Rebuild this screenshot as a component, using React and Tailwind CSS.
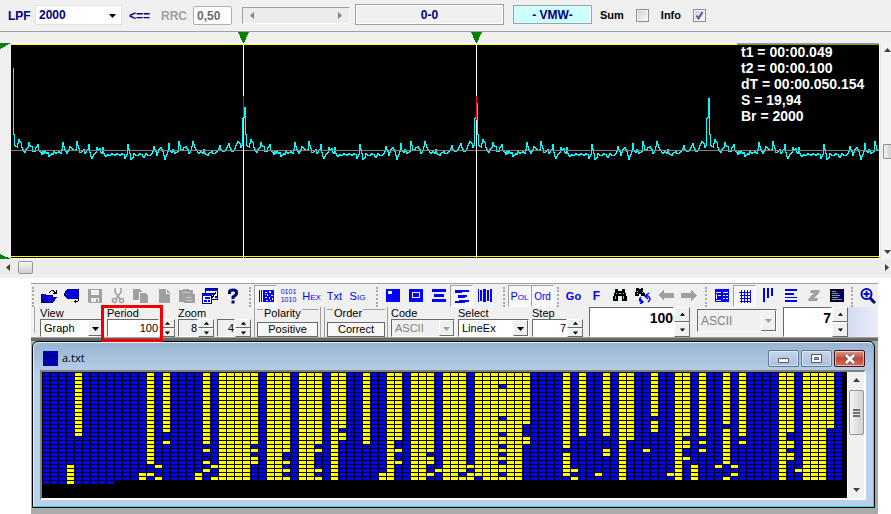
import { useState } from 'react';

// One period of the correlation trace, [dx, y] counted from the peak
const PERIOD = [
    [1, 117], [1, 134], [2, 140], [2, 145], [4, 146], [5, 147], [5, 143], [6, 139], [8, 142], [9, 147], [10, 149], [11, 151], [12, 152], [13, 149],
    [15, 147], [16, 142], [17, 145], [19, 146], [20, 151], [22, 151], [23, 147], [24, 146], [25, 144], [26, 150], [28, 152], [29, 154], [30, 151],
    [31, 153], [32, 151], [34, 153], [35, 152], [36, 156], [38, 154], [39, 153], [40, 154], [41, 151], [43, 153], [44, 152], [46, 151], [48, 153],
    [49, 149], [50, 142], [52, 149], [54, 153], [55, 151], [57, 146], [59, 148], [61, 150], [63, 149], [64, 141], [66, 148], [67, 152], [69, 151],
    [71, 149], [72, 153], [75, 149], [76, 144], [77, 152], [78, 156], [79, 158], [81, 154], [83, 152], [84, 147], [85, 150], [87, 148], [88, 152],
    [89, 153], [90, 147], [91, 153], [93, 156], [95, 154], [97, 155], [99, 153], [101, 154], [102, 155], [104, 153], [107, 155], [109, 153],
    [111, 154], [112, 158], [114, 154], [115, 144], [117, 153], [118, 159], [120, 157], [121, 153], [123, 155], [125, 155], [127, 153], [129, 154],
    [131, 157], [133, 153], [135, 155], [137, 155], [139, 153], [140, 151], [141, 146], [143, 151], [144, 155], [146, 149], [148, 147], [150, 151],
    [152, 159], [153, 156], [155, 151], [156, 143], [157, 150], [159, 152], [160, 149], [162, 153], [165, 151], [166, 141], [168, 149], [169, 150],
    [171, 147], [173, 146], [175, 149], [176, 153], [178, 150], [180, 141], [182, 147], [184, 150], [186, 153], [188, 151], [190, 153], [191, 149],
    [192, 153], [195, 155], [196, 153], [199, 151], [200, 153], [202, 153], [205, 150], [207, 145], [208, 149], [210, 151], [212, 150], [214, 147],
    [216, 143], [217, 147], [219, 151], [221, 150], [223, 145], [225, 141], [227, 143], [228, 147], [229, 145], [230, 141], [230, 118], [231, 117],
];

const PEAKS = [
    [12, 68],
    [244, 107],
    [476, 103],
    [708, 98],
];

// Stepped trace: one horizontal and one vertical move per pixel column
function tracePath() {
    const points = PEAKS.flatMap(([x, top]) => [[x, top], ...PERIOD.map(([dx, y]) => [x + dx, y])]).filter(([x]) => x < 879);
    let d = `M${points[0][0] + 0.5} ${points[0][1] + 0.5}`;
    for (let i = 1; i < points.length; i++) {
        const [x0, y0] = points[i - 1];
        const [x1, y1] = points[i];
        if (x1 === x0) d += `V${y1 + 0.5}`;
        for (let x = x0 + 1; x <= x1; x++) {
            const y = Math.round(y0 + ((y1 - y0) * (x - x0)) / (x1 - x0));
            d += `H${x + 0.5}V${y + 0.5}`;
        }
    }
    return d;
}

const COLUMNS = 100;
const ALL = [[0, 26]];

// Column -> ranges of rows holding a "1"
const BITS = {
    3: [[23, 27]], 4: [[0, 15]], 12: [[25, 26]], 13: [[0, 22], [25, 25]], 14: [[23, 23], [26, 26]], 15: [[0, 14], [17, 17]],
    19: [[25, 26]], 20: [[0, 17], [19, 19], [22, 22], [24, 24]], 21: [[23, 23], [26, 26]],
    22: ALL, 23: ALL, 24: ALL, 25: ALL, 26: [[0, 17], [19, 19], [21, 22]],
    28: ALL, 29: ALL, 30: [[0, 19], [22, 22], [24, 24], [26, 26]], 32: ALL, 33: ALL, 34: [[0, 17], [19, 19], [24, 24], [26, 26]],
    36: ALL, 37: [[0, 13], [15, 16]], 40: [[0, 17]], 42: [[25, 26]], 43: ALL, 44: [[0, 16], [19, 19], [22, 22]],
    46: ALL, 47: ALL, 48: [[0, 19], [21, 22], [25, 25]], 49: [[24, 24]], 50: ALL, 51: ALL, 52: [[0, 24], [26, 26]],
    53: [[23, 23], [25, 26]], 54: [[0, 25]], 55: ALL, 56: ALL,
    57: [[0, 2], [4, 10], [12, 14], [16, 17], [19, 19], [21, 21], [23, 24], [26, 26]],
    58: ALL, 59: ALL, 60: [[0, 12], [16, 17]], 65: [[0, 18], [20, 25]], 66: [[24, 24], [26, 26]], 67: [[0, 15]], 69: [[25, 25]],
    70: [[0, 15], [19, 20]], 72: ALL, 73: [[0, 16]], 75: [[19, 19]], 76: [[0, 10], [12, 14]], 78: [[25, 25]], 79: ALL,
    80: [[0, 15], [17, 18], [21, 21]], 81: [[23, 26]], 82: [[0, 15], [17, 17], [19, 19]], 84: [[23, 23]],
    85: [[0, 12], [14, 22], [26, 26]], 86: [[23, 23], [25, 25]], 87: [[0, 15], [17, 17]],
    92: ALL, 93: [[0, 14], [17, 18], [20, 21]], 94: [[24, 24]], 95: ALL, 96: ALL, 97: ALL, 98: [[0, 13]],
};

function bitmapPath(wanted) {
    let d = '';
    for (let col = 0; col < COLUMNS; col++) {
        const rows = col < 9 ? 28 : 27;
        for (let row = 0; row < rows; row++) {
            const on = (BITS[col] || []).some(([a, b]) => row >= a && row <= b);
            if (on === wanted) d += `M${1 + col * 8} ${1 + row * 4}h7v3h-7z`;
        }
    }
    return d;
}

function Arrow({ dir = 'down', className = 'text-black' }) {
    const shapes = {
        down: 'M0 2h7L3.5 6z',
        up: 'M0 5h7L3.5 1z',
        left: 'M5 0v7L1 3.5z',
        right: 'M2 0v7l4-3.5z',
    };
    return (
        <svg viewBox="0 0 7 7" className={`w-[7px] h-[7px] ${className}`} fill="currentColor">
            <path d={shapes[dir]} />
        </svg>
    );
}

function Check({ id, label, defaultChecked }) {
    return (
        <div className="flex items-center gap-3">
            <label htmlFor={id} className="text-[11px] font-bold text-black">{label}</label>
            <span className="relative flex">
                <input
                    id={id}
                    type="checkbox"
                    defaultChecked={defaultChecked}
                    className="peer appearance-none size-[13px] border border-[#8e8f8f] bg-linear-to-br from-[#c8ccd2] to-white shadow-[inset_0_0_0_1px_#f4f4f4]"
                />
                <svg viewBox="0 0 13 13" className="absolute inset-0 hidden peer-checked:block pointer-events-none" fill="none" stroke="#4a5f97" strokeWidth="2">
                    <path d="M3.5 6.5L5.5 9.5L9.5 3" />
                </svg>
            </span>
        </div>
    );
}

function TopBar() {
    return (
        <div className="flex items-center h-8 bg-[#f0f0f0] border-b border-[#a0a0a0] font-bold text-xs text-[#000080]">
            <label htmlFor="lpf" className="w-[35px] pl-2">LPF</label>
            <div className="relative w-[87px] h-5 -mt-0.5">
                <select id="lpf" className="appearance-none w-full h-full pl-[3px] bg-white border border-[#e2e3ea] font-bold">
                    <option>2000</option>
                </select>
                <span className="absolute right-1.5 top-[7px] pointer-events-none"><Arrow /></span>
            </div>
            <span className="w-[39px] pl-[7px]">&lt;==</span>
            <label htmlFor="rrc" className="w-8 text-[#a0a0a0]">RRC</label>
            <input id="rrc" defaultValue="0,50" className="w-[39px] h-[19px] pl-[3px] bg-white border border-[#b0b0b0] rounded-xs text-[#6d6d6d] font-bold" />
            <div className="flex items-center justify-between w-[108px] h-[17px] ml-2.5 px-1.5 bg-[#ececec] border border-[#a0a0a0] border-b-white border-r-white">
                <button aria-label="Scroll left"><Arrow dir="left" className="text-[#838383]" /></button>
                <button aria-label="Scroll right"><Arrow dir="right" className="text-[#838383]" /></button>
            </div>
            <button className="w-[149px] h-[21px] ml-[5px] -mt-0.5 border border-[#a0a0a0] shadow-[inset_1px_1px_0_#fff,inset_-1px_-1px_0_#fff] font-bold">0-0</button>
            <button className="w-[79px] h-[19px] ml-[9px] -mt-0.5 border border-[#a0a0a0] bg-[#ccffff] shadow-[inset_-1px_0_0_#fff] font-bold">- VMW-</button>
            <div className="flex gap-3 ml-2">
                <Check id="sum" label="Sum" />
                <Check id="info" label="Info" defaultChecked />
            </div>
        </div>
    );
}

function Plot() {
    return (
        <div className="flex bg-[#f0f0f0]">
            <div className="relative flex-1">
                <svg viewBox="0 32 880 227" preserveAspectRatio="none" className="block w-full h-[227px]" shapeRendering="crispEdges">
                    <path d="M11 43h869v216h-869z" fill="#fff" />
                    <path d="M11 44h868v214h-868z" fill="#000" />
                    <path d="M11 44h868v1h-868zM11 256h868v1h-868z" fill="#ff0" />
                    <path d={tracePath()} fill="none" stroke="#00ffff" />
                    <path d="M11 150h868v1h-868z" fill="#808080" />
                    <path d="M243 43h1v215h-1zM476 43h1v215h-1z" fill="#fff" />
                    <path d="M243 96h1v21h-1zM476 96h1v24h-1z" fill="#f00" />
                    <g fill="#008000">
                        <path d="M238 32h11l-5 11h-1zM471 32h11l-5 11h-1z" />
                        <path d="M0 43h11L0 49zM0 254l11 5H0z" />
                    </g>
                </svg>
                <div className="absolute right-px top-[11px] w-[142px] h-[84px] pt-px pl-1 bg-black/40 text-white text-sm leading-4 font-bold whitespace-nowrap">
                    <p>t1 = 00:00.049</p>
                    <p>t2 = 00:00.100</p>
                    <p>dT = 00:00.050.154</p>
                    <p>S = 19,94</p>
                    <p>Br = 2000</p>
                </div>
            </div>
            <div className="flex flex-col items-center w-[11px] mt-[11px] pt-1 pb-1 pl-0.5 bg-[#f3f3f3] border-l border-[#e3e3e3]">
                <button aria-label="Scroll up" className="flex"><Arrow dir="up" className="text-[#404040]" /></button>
                <div className="w-full h-[15px] mt-[90px] border border-r-0 border-[#8e8e8e] rounded-l-xs bg-linear-to-r from-[#f5f5f5] to-[#cfcfcf]" />
                <button aria-label="Scroll down" className="flex mt-auto"><Arrow dir="down" className="text-[#404040]" /></button>
            </div>
        </div>
    );
}

function HScroll() {
    return (
        <div className="flex items-start h-[19px] bg-[#f0f0f0]">
            <div className="flex items-center w-full h-[14px] mt-px pl-[5px] pr-px bg-[#ececec]">
                <button aria-label="Scroll left"><Arrow dir="left" className="text-[#404040]" /></button>
                <div className="w-[15px] h-[13px] ml-1.5 border border-[#979797] rounded-xs bg-linear-to-b from-[#f5f5f5] to-[#cfcfcf]" />
                <button aria-label="Scroll right" className="ml-auto"><Arrow dir="right" className="text-[#404040]" /></button>
            </div>
        </div>
    );
}

function Icon({ children, ...rest }) {
    return (
        <svg viewBox="0 0 16 16" className="size-4" fill="#00f" shapeRendering="crispEdges" {...rest}>
            {children}
        </svg>
    );
}

const icons = {
    open: (
        <Icon>
            <path d="M0 6h5v1h7v3H4l-3 5H0z" fill="#000080" />
            <path d="M1 7h4v1h6v1H3l-2 3z" />
            <path d="M4 9h12l-4 6H0z" fill="#000080" />
            <path d="M5 10h9l-3 4H2z" />
            <path d="M8 4h1V3h1V2h3v1h1v1h1V2h1v4h-4V5h1V4h-1V3h-2v1H9v1H8z" fill="#000" />
        </Icon>
    ),
    close: (
        <Icon>
            <path d="M3 1h12v9l-3 1H3L0 7V6z" fill="#000080" />
            <path d="M4 2h10v4H1z" />
            <path d="M1 7h9l3 3H4z" />
            <path d="M10 6h4v4z" />
            <path d="M15 10v3h-1v1h-2v1h-1v-1h-1v-1h1v-1h1v1h2v-3z" fill="#000" />
        </Icon>
    ),
    save: (
        <Icon fill="#a0a0a0" fillRule="evenodd">
            <path d="M1 1h14v14H2l-1-1zM4 2v5h8V2zM4 10v4h5v-3h2v3h1v-4z" />
        </Icon>
    ),
    cut: (
        <Icon fill="none" stroke="#a0a0a0" strokeWidth="1.5" shapeRendering="auto">
            <path d="M5 0v4l5 7M11 0v4l-5 7" />
            <circle cx="4.5" cy="12.5" r="2" />
            <circle cx="11.5" cy="12.5" r="2" />
        </Icon>
    ),
    copy: (
        <Icon fill="#a0a0a0">
            <path d="M0 1h6l3 3v8H0z" />
            <path d="M6.500 4.500h6l3 3v8h-9z" stroke="#f0f0f0" />
        </Icon>
    ),
    page: (
        <Icon fill="#a0a0a0">
            <path d="M3 1h7l4 4v10H3z" />
            <path d="M10.500 1v4.500h4" fill="none" stroke="#f0f0f0" />
        </Icon>
    ),
    paste: (
        <Icon fill="#a0a0a0">
            <path d="M0 2h4V1h6v1h4v4h2v9H5v-1H0z" />
            <path d="M3 4h8v1H3zM7 9h6v1H7zM7 12h6v1H7z" fill="#c8c8c8" />
        </Icon>
    ),
    props: (
        <Icon>
            <path d="M3.500.5h12v11h-12z" fill="#fff" stroke="#000080" />
            <path d="M4 1h11v2H4zM10 5h2v2h-2zM13 8h2v2h-2z" />
            <path d="M.5 5.500h9v10h-9z" fill="#fff" stroke="#000080" />
            <path d="M1 6h8v2H1zM3 9h5v2H3zM2 12h3v2H2zM6 12h2v2H6z" />
            <path d="M10 10l4-6" stroke="#000" />
        </Icon>
    ),
    help: (
        <Icon shapeRendering="auto" fill="none" stroke="#000080" strokeWidth="3">
            <path d="M4.500 6V4q0-2 3.500-2t3.500 2v1.500q0 1.500-3.500 3.500v2M8 12.500v3" />
        </Icon>
    ),
    graph: (
        <Icon>
            <path d="M1 2h1v12H1zM3 2h1v12H3zM5 2h1v12H5zM6 2h10v12H6z" />
            <path d="M7 4h2v1H7zM11 3h2v2h-2zM9 6h1v2H9zM13 7h2v1h-2zM7 9h2v1H7zM11 9h1v2h-1zM14 10h1v2h-1zM8 12h2v1H8zM12 12h1v1h-1zM7 6h1v1H7z" fill="#f5f5f5" />
        </Icon>
    ),
    square: (
        <Icon>
            <path d="M1 1h14v13H1z" />
            <path d="M3 3h4v3H3z" fill="#f0f0f0" />
        </Icon>
    ),
    frame: (
        <Icon>
            <path d="M1 1h14v13H1z" />
            <path d="M4.500 4.500h7v5h-7z" fill="none" stroke="#f0f0f0" />
        </Icon>
    ),
    lines: (
        <Icon>
            <path d="M1 1h14v3H1zM3 6h10v3H3zM1 11h14v3H1z" />
        </Icon>
    ),
    linesEx: (
        <Icon>
            <path d="M1 2h14v2H8v1H1zM4 7h9v2h-2v1H4zM1 13h4v-1h10v2h-4v1H1z" />
        </Icon>
    ),
    bars: (
        <Icon>
            <path d="M1 1h1v13H1zM3 2h2v11H3zM6 1h3v13H6zM10 2h2v11h-2zM13 1h2v13h-2z" />
        </Icon>
    ),
    find: (
        <Icon fill="#000">
            <path d="M3 1h3v2h4V1h3v3l2 5v4h-5V8H6v5H1V9l2-5z" />
            <path d="M4 5h1v1H4zM3 8h1v3H3zM11 5h1v1h-1zM11 8h1v3h-1zM7 5h2v1H7z" fill="#0ff" />
        </Icon>
    ),
    findNext: (
        <Icon fill="#000">
            <path d="M1 0h3v1h2V0h2v3l2 3v2H6V6H4v2H0V4l1-1z" />
            <path d="M2 3h1v1H2zM2 5h1v1H2zM7 4h1v1H7z" fill="#0ff" />
            <path d="M6 9q-3 3 0 5h2M5 11l3 3-3 2M10 8h3q4 3 0 6M14 5l-4 3 3 3" fill="none" stroke="#00f" strokeWidth="1.500" shapeRendering="auto" />
        </Icon>
    ),
    prev: (
        <Icon fill="#a0a0a0">
            <path d="M0 7l6-5v3h10v5H6v3z" />
        </Icon>
    ),
    next: (
        <Icon fill="#a0a0a0">
            <path d="M16 7l-6-5v3H0v5h10v3z" />
        </Icon>
    ),
    table: (
        <Icon>
            <path d="M1 1h14v13H1z" />
            <path d="M2 4h5v1H2zM9 4h5v1H9zM2 6h1v5H2zM4 7h3v1H4zM9 7h2v1H9zM12 7h2v1h-2zM9 10h2v1H9zM12 10h2v1h-2zM2 12h5v1H2z" fill="#f0f0f0" />
        </Icon>
    ),
    grid: (
        <Icon>
            <path d="M4 2h1v13H4zM7 2h1v13H7zM10 2h1v13h-1zM3 4h11v1H3zM3 7h11v1H3zM3 10h11v1H3zM3 13h11v1H3zM13 2h1v13h-1zM2 4h1v1H2z" />
        </Icon>
    ),
    columns: (
        <Icon>
            <path d="M3 0h2v14H3zM7 0h2v10H7zM11 0h2v8h-2z" />
        </Icon>
    ),
    rows: (
        <Icon>
            <path d="M2 1h12v2H2zM2 5h9v2H2zM2 9h12v1H2zM2 12h12v2H2z" />
        </Icon>
    ),
    zed: (
        <Icon fill="#a0a0a0" shapeRendering="auto">
            <path d="M5 2h9l-1 3-5 5h4l-1 3H2l1-3 5-5H4z" />
        </Icon>
    ),
    screen: (
        <Icon>
            <path d="M1 1h14v13H1z" fill="#000" />
            <path d="M2 2h12v11H2z" fill="#000060" />
            <path d="M3 3h4v1H3zM3 5h6v1H3zM3 7h8v1H3zM3 9h6v1H3zM3 11h10v1H3z" fill="#909090" />
        </Icon>
    ),
    zoom: (
        <Icon shapeRendering="auto" fill="none">
            <circle cx="6.500" cy="6" r="5" fill="#fff" stroke="#0000c0" strokeWidth="2" />
            <path d="M3.500 6h6M6.500 3v6" stroke="#00f" strokeWidth="2" />
            <path d="M10 10l5 5" stroke="#000080" strokeWidth="3" />
        </Icon>
    ),
    bits: <span className="block text-[7px] leading-2">0101<br />1010</span>,
    hex: <span className="text-[8px]"><span className="text-[11px]">H</span>EX</span>,
    txt: <span className="text-[11px]">Txt</span>,
    sig: <span className="text-[8px]"><span className="text-[11px]">S</span>IG</span>,
    pol: <span className="text-[8px]"><span className="text-[11px]">P</span>OL</span>,
    ord: <span className="text-[10px]">Ord</span>,
    go: <span className="text-[11px] font-bold">Go</span>,
    f: <span className="text-xs font-bold">F</span>,
};

// Toolbar groups: grip width, then the buttons in order
const GROUPS = [
    ['w-1.5', ['open', 'close', 'save', 'cut', 'copy', 'page', 'paste', 'props', 'help']],
    ['w-2.5', ['graph', 'bits', 'hex', 'txt', 'sig']],
    ['w-3', ['square', 'frame', 'lines', 'linesEx', 'bars']],
    ['w-3', ['pol', 'ord']],
    ['w-2', ['go', 'f', 'find', 'findNext', 'prev', 'next']],
    ['w-2.5', ['table', 'grid', 'columns', 'rows', 'zed', 'screen']],
    ['w-2', ['zoom']],
];

function ToolRow() {
    const [pressed, setPressed] = useState(['graph', 'linesEx', 'pol', 'ord', 'grid']);
    const toggle = (name) =>
        setPressed((list) => (list.includes(name) ? list.filter((n) => n !== name) : [...list, name]));

    return (
        <div className="flex h-6 pt-px border-t border-[#a0a0a0] overflow-hidden">
            {GROUPS.map(([grip, names]) => (
                <div key={names[0]} className="flex shrink-0">
                    <span className={`${grip} flex justify-end pr-[3px]`}>
                        <span className="w-0.5 h-5 mt-0.5 border-l-2 border-dotted border-[#a8a8a8]" />
                    </span>
                    {names.map((name) => (
                        <button
                            key={name}
                            aria-label={name}
                            aria-pressed={pressed.includes(name)}
                            onClick={() => toggle(name)}
                            className="flex items-center justify-center w-[23px] h-[22px] text-[#0000ff] border border-transparent aria-pressed:border-t-[#a0a0a0] aria-pressed:border-l-[#a0a0a0] aria-pressed:border-r-white aria-pressed:border-b-white aria-pressed:bg-[#f7f7f7]"
                        >
                            {icons[name]}
                        </button>
                    ))}
                </div>
            ))}
        </div>
    );
}

const SUNKEN = 'border border-[#696969] border-r-white border-b-white';
const RAISED = 'border border-white border-r-[#696969] border-b-[#696969]';

function Spinner() {
    return (
        <span className="flex flex-col w-4 shrink-0">
            <button aria-label="Up" className={`flex flex-1 items-center justify-center bg-[#f0f0f0] ${RAISED}`}>
                <Arrow dir="up" className="scale-75" />
            </button>
            <button aria-label="Down" className={`flex flex-1 items-center justify-center bg-[#f0f0f0] ${RAISED}`}>
                <Arrow dir="down" className="scale-75" />
            </button>
        </span>
    );
}

function Drop({ id, value, disabled, className = 'h-[18px]' }) {
    return (
        <div className={`relative ${className}`}>
            <select
                id={id}
                disabled={disabled}
                aria-label={id}
                className={`appearance-none w-full h-full pl-[3px] bg-white text-black disabled:bg-[#f0f0f0] disabled:text-[#808080] opacity-100 ${SUNKEN}`}
            >
                <option>{value}</option>
            </select>
            <span className={`absolute right-px inset-y-px flex items-center justify-center w-[15px] bg-[#f0f0f0] pointer-events-none ${RAISED}`}>
                <Arrow className={disabled ? 'text-[#a0a0a0]' : 'text-black'} />
            </span>
        </div>
    );
}

function Num({ id, value, white = true }) {
    return (
        <div className="flex h-[18px]">
            <input
                id={id}
                aria-label={id}
                defaultValue={value}
                className={`min-w-0 flex-1 text-right text-black ${white ? 'bg-white' : 'bg-[#f0f0f0]'} ${SUNKEN}`}
            />
            <Spinner />
        </div>
    );
}

function Field({ id, label, className, children }) {
    return (
        <div className={`flex flex-col ${className}`}>
            <label htmlFor={id} className="h-3 leading-[13px]">{label}</label>
            {children}
        </div>
    );
}

function Group({ label, value, className }) {
    return (
        <div className={`px-0.5 border-x border-[#a0a0a0] ${className}`}>
            <div className="flex h-[15px]">
                <span className="w-1.5 mt-0.5 mr-px border-t border-[#a0a0a0]" />
                <span className="leading-[13px]">{label}</span>
                <span className="flex-1 mt-0.5 ml-px border-t border-[#a0a0a0]" />
            </div>
            <button className="block w-full h-[15px] leading-[13px] bg-[#f8f8f8] border border-[#696969]">{value}</button>
        </div>
    );
}

function ParamRow() {
    return (
        <div className="flex h-[31px] text-[11px] text-black border-b border-[#a0a0a0]">
            <span className="w-[9px] pl-0.5 pb-1"><span className="block w-0.5 h-full border-x border-white border-r-[#a0a0a0]" /></span>
            <div className="flex gap-[3px]">
                <Field id="view" label="View" className="w-16"><Drop id="view" value="Graph" /></Field>
                <div className="relative">
                    <Field id="period" label="Period" className="w-[68px]"><Num id="period" value="100" /></Field>
                    <span className="absolute -left-1.5 -top-0.5 w-[62px] h-[37px] z-10 border-3 border-[#f00000] pointer-events-none" />
                </div>
                <Field id="zoomX" label="Zoom" className="w-9"><Num id="zoomX" value="8" white={false} /></Field>
                <div className="w-[34px] pt-3"><Num id="zoomY" value="4" white={false} /></div>
                <Group label="Polarity" value="Positive" className="w-[67px]" />
                <Group label="Order" value="Correct" className="w-16" />
                <Field id="code" label="Code" className="w-16"><Drop id="code" value="ASCII" disabled /></Field>
                <Field id="select" label="Select" className="w-[71px]"><Drop id="select" value="LineEx" /></Field>
                <Field id="step" label="Step" className="w-[51px]"><Num id="step" value="7" /></Field>
            </div>
            <div className="flex w-[101px] ml-1.5 text-sm font-bold">
                <input aria-label="Period value" defaultValue="100" className={`min-w-0 flex-1 pb-2 text-right bg-white ${SUNKEN}`} />
                <Spinner />
            </div>
            <div className="pt-0.5 ml-[7px] text-xs"><Drop id="codeMain" value="ASCII" disabled className="w-20 h-[23px]" /></div>
            <div className="flex w-[65px] ml-1.5 text-sm font-bold">
                <input aria-label="Step value" defaultValue="7" className={`min-w-0 flex-1 pb-2 text-right bg-white ${SUNKEN}`} />
                <Spinner />
            </div>
            <div className="flex-1 bg-linear-to-r from-[#d4daf0] to-[#eceef8]" />
        </div>
    );
}

function CaptionButton({ label, className, children }) {
    return (
        <button
            aria-label={label}
            className={`flex items-center justify-center w-[31px] h-[17px] rounded-xs border shadow-[inset_0_0_0_1px_rgba(255,255,255,0.5)] ${className}`}
        >
            {children}
        </button>
    );
}

function Child() {
    const blue = 'border-[#5f7894] bg-linear-to-b from-[#c3d5e9] to-[#a9c1dc]';
    return (
        <div className="ml-px mr-[3px] border border-black rounded-t-md">
            <div className="pl-1.5 pr-[7px] pb-1.5 border border-[#dff4fb] border-r-[#3fd0e6] border-b-[#3fd0e6] rounded-t-md bg-linear-to-b from-[#98b4d2] via-[#b9d1ea] via-20% to-[#b9d1ea]">
                <div className="flex items-center h-[27px] pl-[3px] text-xs text-black">
                    <svg viewBox="0 0 15 15" className="size-[15px] mt-1">
                        <path d="M0 0h15v15H0z" fill="#0000b4" />
                        <path d="M3 4h3M8 4h4M3 7h5M10 7h2M3 10h3M8 11h3" stroke="#000060" />
                    </svg>
                    <span className="ml-1 mt-1 text-[11px] font-['Open_Sans',sans-serif]">a.txt</span>
                    <div className="flex gap-0.5 ml-auto mt-1 mr-px">
                        <CaptionButton label="Minimize" className={blue}>
                            <svg viewBox="0 0 11 8" className="w-[11px] h-2"><path d="M.5 3.500h10v4H.5z" fill="#fff" stroke="#535666" /></svg>
                        </CaptionButton>
                        <CaptionButton label="Maximize" className={blue}>
                            <svg viewBox="0 0 11 9" className="w-[11px] h-[9px]" stroke="#535666">
                                <path d="M.5.5h10v8H.5z" fill="#fff" />
                                <path d="M3.500 3.500h4v2h-4z" fill="#a9c1dc" />
                            </svg>
                        </CaptionButton>
                        <CaptionButton label="Close" className="border-[#43141b] bg-linear-to-b from-[#dc9a8e] via-[#bd4a37] to-[#d2705c]">
                            <svg viewBox="0 0 12 10" className="w-3 h-2.5">
                                <path d="M2 1l8 8M10 1L2 9" stroke="#535666" strokeWidth="4" />
                                <path d="M2 1l8 8M10 1L2 9" stroke="#fff" strokeWidth="2.500" />
                            </svg>
                        </CaptionButton>
                    </div>
                </div>
                <div className="flex h-[130px] border-2 border-[#808080] border-r-white border-b-white bg-black">
                    <div className="flex-1 overflow-hidden">
                        <svg viewBox="0 0 805 126" className="block w-[805px] h-[126px]" shapeRendering="crispEdges">
                            <path d={bitmapPath(false)} fill="#0000ff" />
                            <path d={bitmapPath(true)} fill="#ffff00" />
                        </svg>
                    </div>
                    <div className="flex flex-col items-center w-[17px] py-[5px] bg-[#f0f0f0] border-l border-white">
                        <button aria-label="Scroll up" className="flex"><Arrow dir="up" className="text-[#404040]" /></button>
                        <div className="flex flex-col items-center justify-center gap-px w-[15px] h-[45px] mt-1.5 rounded-xs border border-[#979797] bg-linear-to-r from-[#f5f5f5] to-[#cfcfcf]">
                            <span className="w-[7px] h-0.5 bg-[#707070]" />
                            <span className="w-[7px] h-0.5 bg-[#707070]" />
                            <span className="w-[7px] h-0.5 bg-[#707070]" />
                        </div>
                        <button aria-label="Scroll down" className="flex mt-auto"><Arrow dir="down" className="text-[#404040]" /></button>
                    </div>
                </div>
            </div>
        </div>
    );
}

function App() {
    return (
        <div className="min-h-screen flex flex-col bg-white font-['Liberation_Sans',sans-serif]">
            <TopBar />
            <Plot />
            <HScroll />
            <div className="flex-1 flex flex-col mt-[5px] ml-[31px] mr-[13px] bg-[#ababab]">
                <div className="bg-[#f0f0f0]">
                    <ToolRow />
                    <ParamRow />
                </div>
                <div className="h-[3px] bg-[#696969]" />
                <Child />
            </div>
        </div>
    );
}

export default App;
